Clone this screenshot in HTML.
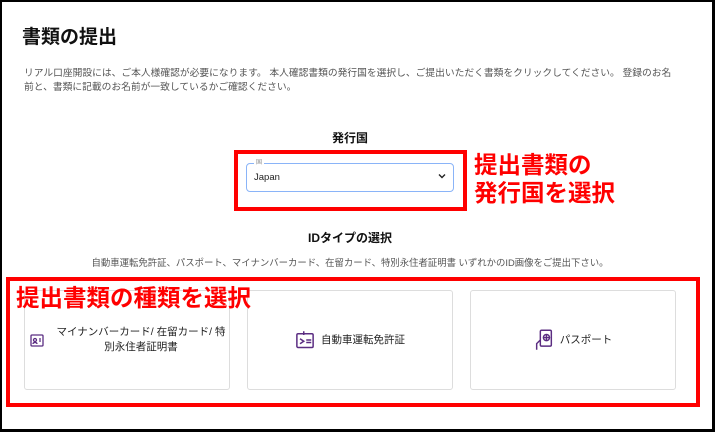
<!DOCTYPE html><html><head><meta charset="utf-8"><style>
*{margin:0;padding:0;box-sizing:border-box}
body{width:715px;height:432px;overflow:hidden;background:#000;font-family:"Liberation Sans","Noto Sans CJK JP",sans-serif;position:relative}
.page{position:absolute;left:2px;top:2px;width:710px;height:427px;background:#fff}
.a{position:absolute}
.card{position:absolute;top:290px;width:206px;height:100px;border:1px solid #ddd;border-radius:3px;background:#fff;display:flex;align-items:center;justify-content:center;font-size:10.5px;color:#222;text-align:center;line-height:15px}
.red{color:#f00;font-weight:bold;font-size:23.5px;line-height:28px;white-space:nowrap}
</style></head><body><div class="page"></div>
<div class="a" style="left:22px;top:22px;font-size:19px;font-weight:bold;color:#111">書類の提出</div>
<div class="a" style="left:24px;top:67px;width:690px;font-size:9.75px;line-height:14px;color:#555;white-space:nowrap">リアル口座開設には、ご本人様確認が必要になります。 本人確認書類の発行国を選択し、ご提出いただく書類をクリックしてください。 登録のお名<br>前と、書類に記載のお名前が一致しているかご確認ください。</div>
<div class="a" style="left:300px;top:129px;width:100px;text-align:center;font-size:12px;font-weight:bold;color:#111">発行国</div>
<div class="a" style="left:234px;top:150px;width:233px;height:61px;border:4px solid #f00"></div>
<div class="a" style="left:246px;top:163px;width:208px;height:29px;border:1.5px solid #8ab4f8;border-radius:4px"></div>
<div class="a" style="left:254px;top:157px;background:#fff;padding:0 2px;font-size:6px;color:#888">国</div>
<div class="a" style="left:254px;top:172px;font-size:9.5px;color:#222">Japan</div>
<svg class="a" style="left:438px;top:173px" width="8" height="6" viewBox="0 0 8 6"><path d="M1 1.5l3 3 3-3" fill="none" stroke="#222" stroke-width="1.4"/></svg>
<div class="a red" style="left:474px;top:151px">提出書類の<br>発行国を選択</div>
<div class="a" style="left:250px;top:229px;width:200px;text-align:center;font-size:12px;font-weight:bold;color:#111">IDタイプの選択</div>
<div class="a" style="left:20px;top:255px;width:660px;text-align:center;font-size:9.4px;color:#555;white-space:nowrap">自動車運転免許証、パスポート、マイナンバーカード、在留カード、特別永住者証明書 いずれかのID画像をご提出下さい。</div>
<div class="a" style="left:6px;top:277px;width:694px;height:130px;border:4px solid #f00"></div>
<div class="card" style="left:24px"><svg width="16" height="16" viewBox="0 0 16 16" style="margin-right:12px" fill="none" stroke="#5b2d82" stroke-width="1.3"><rect x="2" y="3" width="12" height="11" rx="1"/><circle cx="6" cy="8" r="1.5"/><path d="M4 12c0-2 4-2 4 0M10 7h2M10 9h2"/></svg><span>マイナンバーカード/ 在留カード/ 特<br>別永住者証明書</span></div>
<div class="card" style="left:247px"><svg width="20" height="20" viewBox="0 0 16 16" style="margin-right:6px" fill="none" stroke="#5b2d82" stroke-width="1.2"><rect x="1.5" y="3" width="13" height="11" rx="1"/><path d="M7 1v3M4 7l3 2-3 2M9 8h4M9 10h4"/></svg><span>自動車運転免許証</span></div>
<div class="card" style="left:470px"><svg width="20" height="22" viewBox="0 0 16 18" style="margin-right:6px" fill="none" stroke="#5b2d82" stroke-width="1.2"><rect x="5" y="1" width="9" height="13" rx="1"/><circle cx="10" cy="7" r="2.5"/><path d="M2 17v-5l3-3M10 4.5v5M7.5 7h5"/></svg><span>パスポート</span></div>
<div class="a red" style="left:16px;top:284px">提出書類の種類を選択</div>
</body></html>
